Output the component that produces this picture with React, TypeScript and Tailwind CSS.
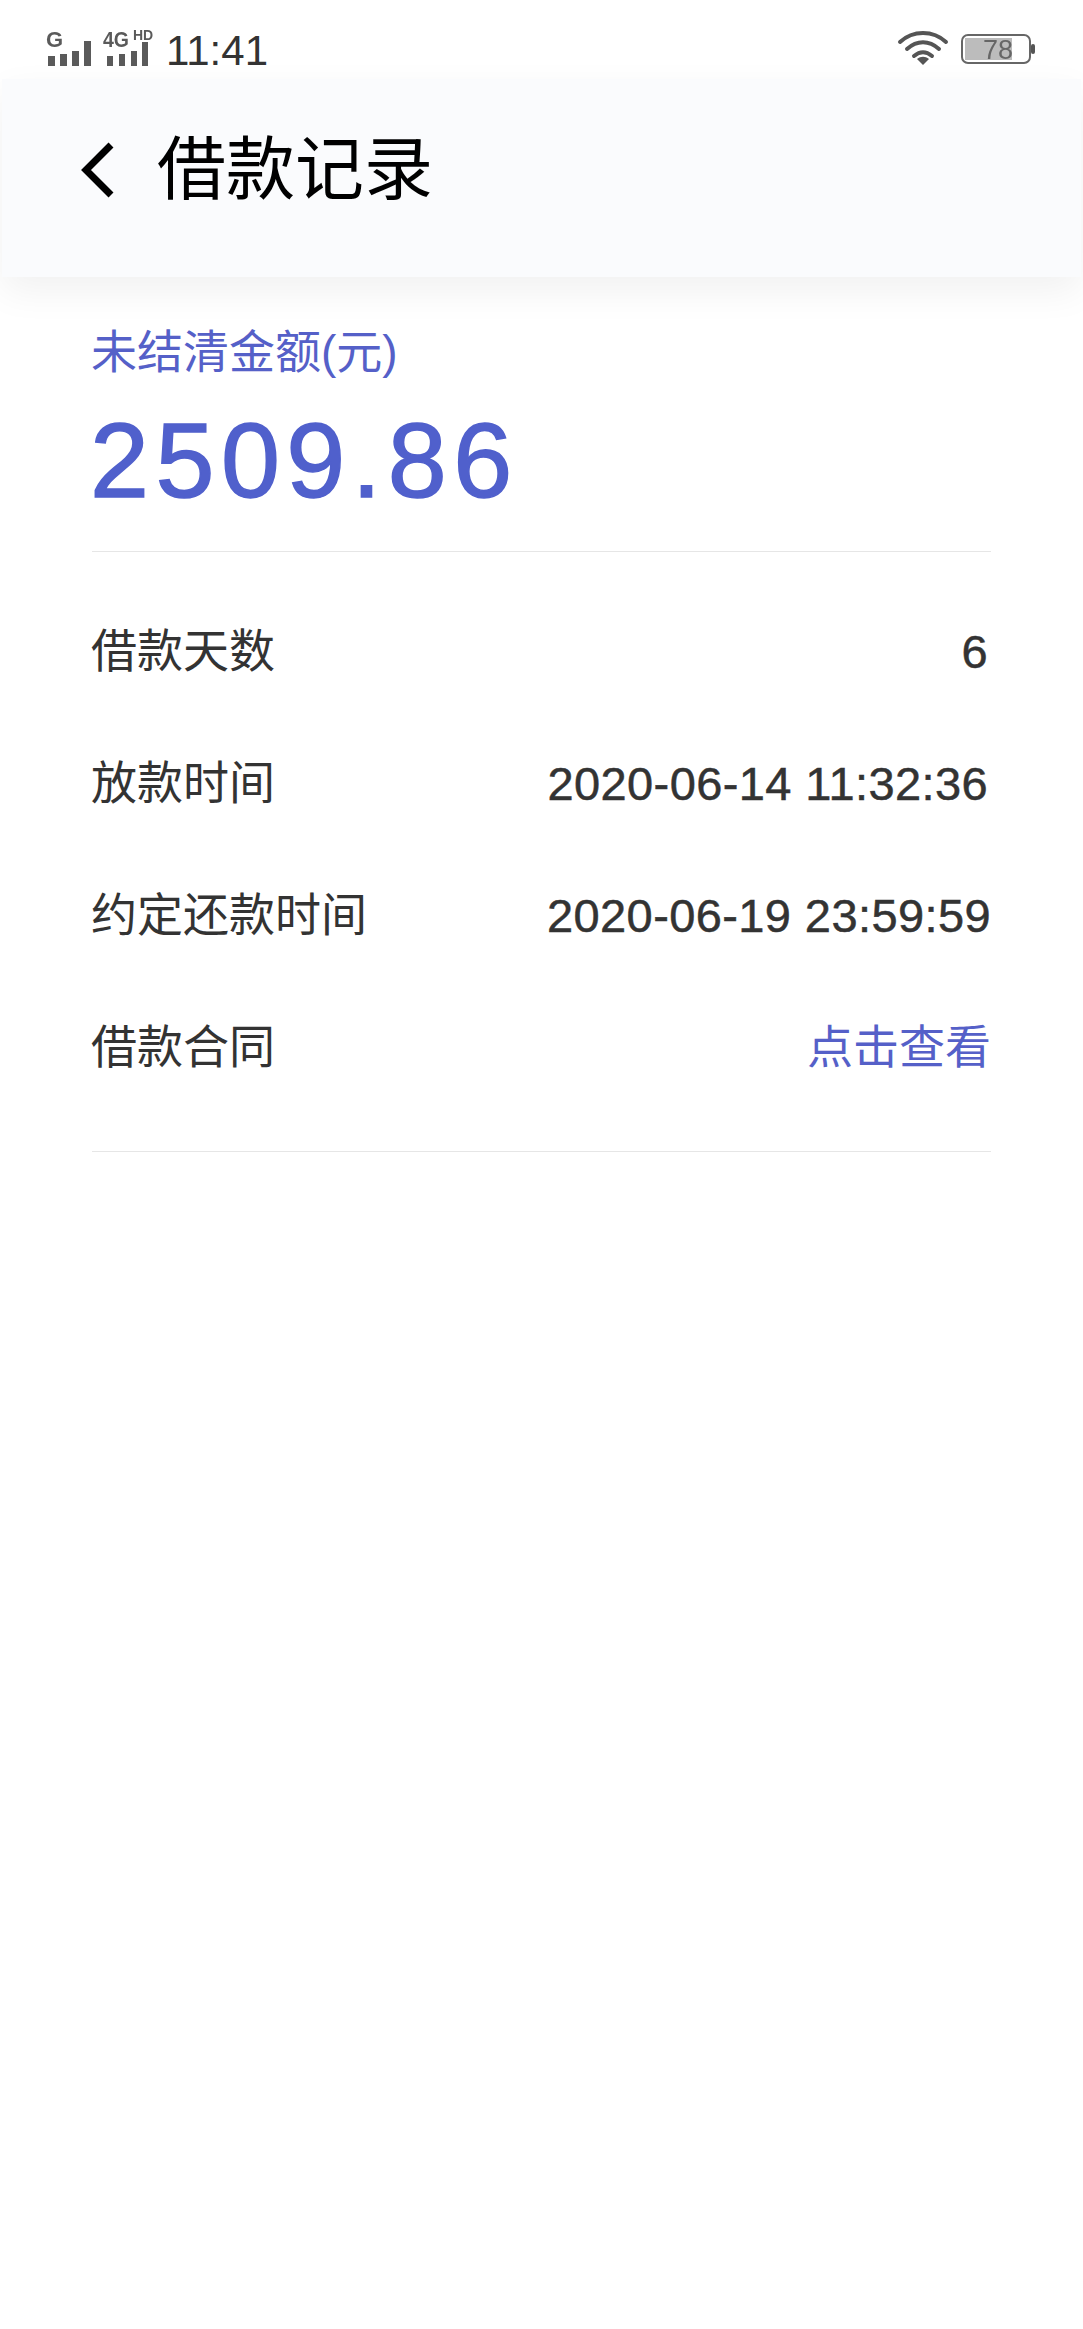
import React from "react";

const font = { fontFamily: '"Liberation Sans","Noto Sans CJK SC",sans-serif' };

function Row({ label, value, blue, pad }: { label: string; value: string; blue?: boolean; pad?: string }) {
  return (
    <div className="flex items-center justify-between h-[132px]">
      <span className="text-[46px] text-[#333333] leading-none ml-[-1px]">{label}</span>
      <span className={`leading-none ${blue ? "text-[46px] text-[#5560c8]" : `text-[47px] text-[#333333] tracking-[0.4px] [-webkit-text-stroke:0.5px_#333333] ${pad}`}`}>{value}</span>
    </div>
  );
}

export default function App() {
  return (
    <div className="w-[1083px] h-[2329px] bg-white overflow-hidden" style={font}>
      <div className="h-[79px] flex items-start justify-between pl-[46px] pr-[46px] bg-white">
        <div className="flex items-start mt-[26px]">
          <svg width="118" height="46" viewBox="0 0 118 46" fill="#5a5a5a" className="blur-[0.5px]">
            <text x="0" y="21" fontSize="22" fontWeight="700" fontFamily="Liberation Sans">G</text>
            <rect x="2" y="30" width="7" height="10" /><rect x="14" y="28" width="7" height="12" /><rect x="26" y="25" width="7" height="15" /><rect x="38" y="15" width="7" height="25" />
            <text x="57" y="21" fontSize="22" fontWeight="700" fontFamily="Liberation Sans" textLength="26" lengthAdjust="spacingAndGlyphs">4G</text>
            <text x="87" y="14" fontSize="14" fontWeight="700" fontFamily="Liberation Sans">HD</text>
            <rect x="61" y="30" width="6" height="10" /><rect x="73" y="28" width="6" height="12" /><rect x="85" y="25" width="6" height="15" /><rect x="96" y="16" width="6" height="24" />
          </svg>
          <span className="text-[42px] leading-none text-[#333333] mt-[4px] ml-[2px]">11:41</span>
        </div>
        <div className="flex items-start mt-[30px] blur-[0.4px]">
          <svg width="52" height="36" viewBox="0 0 52 36" fill="none" stroke="#555555" strokeLinecap="round">
            <path d="M3 12 C16 0 36 0 49 12" strokeWidth="4" />
            <path d="M10 19 C20 10 32 10 42 19" strokeWidth="4" />
            <path d="M17 26 C23 21 29 21 35 26" strokeWidth="4" />
            <path d="M20 29 L26 35 L32 29 C28 26 24 26 20 29 Z" fill="#555555" stroke="none" />
          </svg>
          <svg width="76" height="34" viewBox="0 0 76 34" className="ml-[12px] mt-[2px]">
            <rect x="1" y="3" width="68" height="28" rx="6" fill="white" stroke="#666666" strokeWidth="2" />
            <rect x="4" y="6" width="47" height="22" fill="#bcbcbc" />
            <rect x="70" y="12" width="4" height="10" rx="2" fill="#555555" />
            <text x="22" y="27" fontSize="27" fill="#666666" fontFamily="Liberation Sans">78</text>
          </svg>
        </div>
      </div>

      <div className="h-[198px] bg-[#fafbfd] flex items-center pl-[80px] pb-[16px] shadow-[0_14px_36px_rgba(0,0,0,0.06)] relative mx-[2px]">
        <svg width="36" height="56" viewBox="0 0 36 56" fill="none" stroke="#000000" strokeWidth="7" className="mr-[41px] ml-[-2px]">
          <path d="M31 3 L6 28 L31 53" />
        </svg>
        <span className="text-[69px] leading-none text-black">借款记录</span>
      </div>

      <div className="mx-[92px] w-[899px]">
        <div className="h-[275px] border-b border-[#e6e6e6]">
          <div className="text-[46px] leading-none text-[#5560c8] pt-[52px] ml-[-1px]">未结清金额(元)</div>
          <div className="text-[106px] leading-none text-[#5060cc] mt-[32px] tracking-[6.5px] ml-[-2px] [-webkit-text-stroke:1.5px_#5060cc]">2509.86</div>
        </div>
        <div className="pt-[33px] h-[600px] border-b border-[#e6e6e6]">
          <Row label="借款天数" value="6" pad="pr-[3px]" />
          <Row label="放款时间" value="2020-06-14 11:32:36" pad="pr-[3px]" />
          <Row label="约定还款时间" value="2020-06-19 23:59:59" pad="pr-[0px]" />
          <Row label="借款合同" value="点击查看" blue />
        </div>
      </div>
    </div>
  );
}
